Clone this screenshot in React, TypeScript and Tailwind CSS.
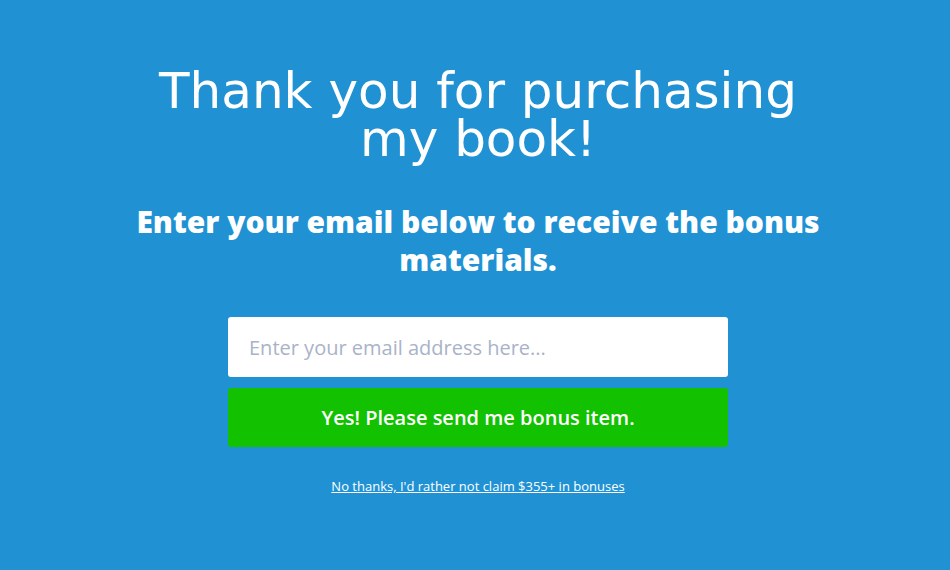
import React from "react";

export default function App() {
  return (
    <div className="w-[950px] h-[570px] bg-[#2092d4] flex flex-col items-center overflow-hidden pl-[6px] font-['Open_Sans',sans-serif]">
      <h1 className="mt-[67px] w-[720px] text-center text-white text-[50px] leading-[48px] font-normal font-['DejaVu_Sans',sans-serif]">
        Thank you for purchasing my book!
      </h1>
      <h2 className="mt-[40px] w-[720px] text-center text-white text-[30px] leading-[38px] font-extrabold">
        Enter your email below to receive the bonus materials.
      </h2>
      <div className="mt-[38px] w-[500px] flex flex-col gap-[11px]">
        <input
          className="h-[60px] w-full rounded-[3px] bg-white px-[21px] text-[20px] text-gray-700 outline-none placeholder:text-[#a9b3c8]"
          placeholder="Enter your email address here..."
        />
        <button className="h-[59px] w-full rounded-[3px] bg-[#12c100] text-white text-[20px] font-semibold">
          Yes! Please send me bonus item.
        </button>
      </div>
      <a href="#" className="mt-[30px] text-white text-[13px] underline">
        No thanks, I'd rather not claim $355+ in bonuses
      </a>
    </div>
  );
}
